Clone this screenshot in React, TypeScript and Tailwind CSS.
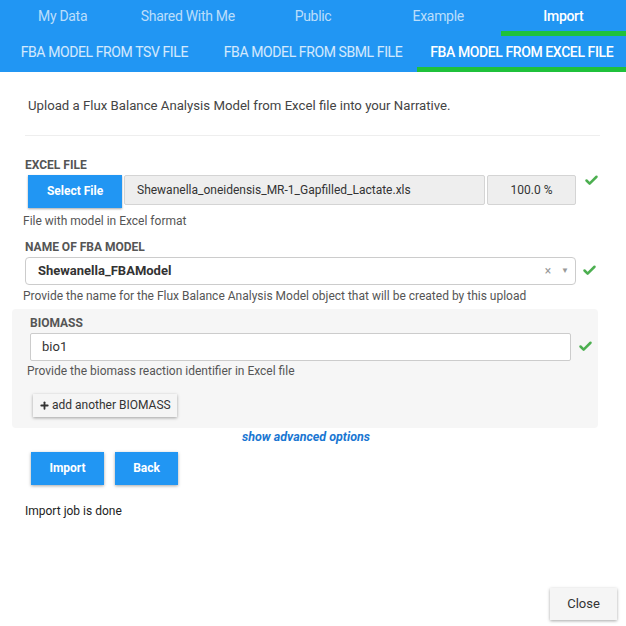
import { Check, Plus } from "lucide-react";

const TOP_TABS = ["My Data", "Shared With Me", "Public", "Example", "Import"];
const SUB_TABS = ["FBA MODEL FROM TSV FILE", "FBA MODEL FROM SBML FILE", "FBA MODEL FROM EXCEL FILE"];

const OK = () => (
  <Check className="h-[15px] w-[15px] shrink-0 text-[#4caf50]" strokeWidth={4} />
);

export default function App() {
  return (
    <div className="relative h-[626px] w-[626px] overflow-hidden bg-white font-['Roboto',sans-serif] text-[#333]">
      {/* tab bars */}
      <div className="bg-[#2196f3]">
        <div className="flex h-[36px]">
          {TOP_TABS.map((t, i) => (
            <div key={t} className="relative flex flex-1 items-center justify-center pb-[4px]">
              <span
                className={`text-[14px] tracking-[-0.3px] ${
                  i === 4 ? "font-medium text-white" : "text-white/70"
                }`}
              >
                {t}
              </span>
              {i === 4 && <div className="absolute bottom-0 left-0 right-0 h-[5px] bg-[#1fc13b]" />}
            </div>
          ))}
        </div>
        <div className="flex h-[36px]">
          {SUB_TABS.map((t, i) => (
            <div key={t} className="relative flex flex-1 items-center justify-center pb-[4px]">
              <span
                className={`text-[14px] tracking-[-0.4px] ${
                  i === 2 ? "font-medium text-white" : "text-white/80"
                }`}
              >
                {t}
              </span>
              {i === 2 && <div className="absolute bottom-0 left-0 right-0 h-[5px] bg-[#1fc13b]" />}
            </div>
          ))}
        </div>
      </div>

      <div className="px-[25px]">
        <p className="mt-[24px] pl-[3px] text-[13.2px] text-[#444]">
          Upload a Flux Balance Analysis Model from Excel file into your Narrative.
        </p>
        <div className="mt-[19px] h-px w-[575px] bg-[#eee]" />

        {/* excel file */}
        <div className="mt-[20px] text-[12px] font-bold uppercase text-[#555]">Excel File</div>
        <div className="mt-[1px] flex items-start gap-[2px] pl-[3px]">
          <button className="h-[33px] w-[94px] bg-[#2196f3] text-[12px] font-bold text-white shadow-[0_1px_2px_rgba(0,0,0,0.35)]">
            Select File
          </button>
          <div className="flex h-[30px] w-[361px] items-center rounded-[2px] border border-[#d4d4d4] bg-[#eee] pl-[12px] text-[12px] text-[#333]">
            Shewanella_oneidensis_MR-1_Gapfilled_Lactate.xls
          </div>
          <div className="flex h-[30px] w-[89px] items-center justify-center rounded-[2px] border border-[#d4d4d4] bg-[#eee] text-[12px] text-[#333]">
            100.0 %
          </div>
          <div className="ml-[6px] mt-[-2px]">
            <OK />
          </div>
        </div>
        <div className="mt-[4px] ml-[-2px] text-[12px] text-[#555]">File with model in Excel format</div>

        {/* model name */}
        <div className="mt-[8px] text-[12px] font-bold uppercase text-[#555]">Name of FBA Model</div>
        <div className="mt-[1px] flex items-center gap-[6px]">
          <div className="flex h-[28px] w-[551px] shrink-0 items-center rounded-[4px] border border-[#ccc] bg-white pl-[12px] pr-[6px]">
            <span className="flex-1 text-[13px] font-bold text-[#333]">Shewanella_FBAModel</span>
            <span className="mr-[10px] text-[12px] leading-none text-[#999]">×</span>
            <span className="text-[8px] leading-none text-[#999]">▼</span>
          </div>
          <OK />
        </div>
        <div className="mt-[2px] ml-[-2px] text-[12px] text-[#555]">
          Provide the name for the Flux Balance Analysis Model object that will be created by this upload
        </div>
      </div>

      {/* biomass panel */}
      <div className="mx-[12px] mt-[4px] w-[586px] rounded-[4px] bg-[#f6f6f6] pb-[11px] pl-[18px] pr-[6px] pt-[5px]">
        <div className="text-[12px] font-bold uppercase text-[#555]">Biomass</div>
        <div className="mt-[1px] flex items-center gap-[7px]">
          <div className="flex h-[28px] w-[541px] shrink-0 items-center rounded-[2px] border border-[#ccc] bg-white pl-[11px] text-[13px] text-[#333]">
            bio1
          </div>
          <OK />
        </div>
        <div className="mt-[1px] ml-[-3px] text-[12px] text-[#555]">
          Provide the biomass reaction identifier in Excel file
        </div>
        <button className="ml-[3px] mt-[14px] flex h-[23px] items-center gap-[2px] bg-[#f5f5f5] px-[6px] text-[12px] text-[#333] shadow-[0_1px_3px_rgba(0,0,0,0.35)]">
          <Plus className="h-[11px] w-[11px]" strokeWidth={4} />
          add another BIOMASS
        </button>
      </div>

      <div className="w-[612px] text-center text-[12.5px] font-bold italic text-[#1976d2]">show advanced options</div>

      <div className="ml-[31px] mt-[5px] flex gap-[11px]">
        <button className="h-[33px] w-[73px] bg-[#2196f3] text-[12px] font-bold text-white shadow-[0_1px_3px_rgba(0,0,0,0.35)]">
          Import
        </button>
        <button className="h-[33px] w-[63px] bg-[#2196f3] text-[12px] font-bold text-white shadow-[0_1px_3px_rgba(0,0,0,0.35)]">
          Back
        </button>
      </div>

      <div className="ml-[25px] mt-[17px] text-[12px] text-[#222]">Import job is done</div>

      <button className="absolute bottom-[6px] right-[9px] h-[32px] w-[67px] bg-[#f5f5f5] text-[13px] text-[#333] shadow-[0_1px_3px_rgba(0,0,0,0.35)]">
        Close
      </button>
    </div>
  );
}
